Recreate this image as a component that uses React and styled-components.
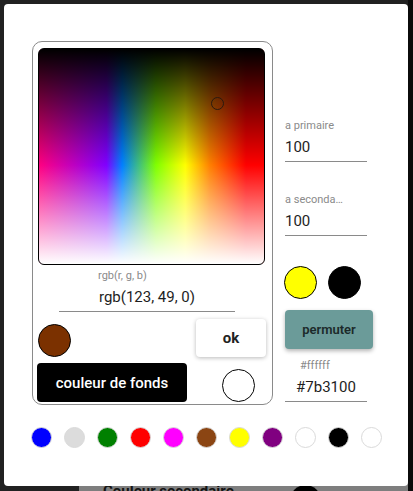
import React from 'react';
import styled, { createGlobalStyle } from 'styled-components';

const GlobalStyle = createGlobalStyle`
  html, body {
    margin: 0;
    padding: 0;
    background: #212121;
    font-family: Roboto, "Noto Sans", "Liberation Sans", sans-serif;
  }
  * { box-sizing: border-box; }
`;

const Screen = styled.div`
  position: relative;
  width: 413px;
  height: 491px;
  overflow: hidden;
  background: #212121;
  box-shadow: inset -5px 0 0 #0b0b0b;
`;

// page behind the modal (only a strip is visible at the bottom)
const Page = styled.div`
  padding-top: 479px;
`;

const PagePanel = styled.div`
  margin-left: 79px;
  width: 329px;
  height: 40px;
  background: #7e7e7e;
  display: flex;
  align-items: flex-start;
  padding: 3px 0 0 24px;
`;

const PageTitle = styled.div`
  font-size: 15px;
  font-weight: 700;
  color: #141414;
  white-space: nowrap;
  width: 187px;
`;

const PageDot = styled.div`
  width: 31px;
  height: 31px;
  border-radius: 50%;
  background: #000;
  margin-top: 3px;
`;

const Dialog = styled.div`
  position: absolute;
  top: 4px;
  left: 4px;
  width: 404px;
  height: 482px;
  background: #fff;
  border-radius: 4px;
  padding: 37px 0 0 28px;
`;

const Main = styled.div`
  display: flex;
  gap: 12px;
`;

const Card = styled.div`
  width: 241px;
  height: 364px;
  border: 1px solid #8a8a8a;
  border-radius: 10px;
  padding: 6px 0 0 5px;
  display: flex;
  flex-direction: column;
`;

const Saturation = styled.div`
  position: relative;
  width: 227px;
  height: 217px;
  border: 1px solid #000;
  border-radius: 6px;
  background:
    linear-gradient(to bottom, #000 0%, rgba(0,0,0,0) 54%, rgba(255,255,255,0) 54%, #fff 100%),
    linear-gradient(to right, #ff0080 0%, #8000ff 30%, #0080ff 37%, #80ff00 52%, #ffff00 65%, #ff8000 76%, #ff0000 92%, #ff0000 100%);
`;

const Cursor = styled.div`
  position: absolute;
  left: 172px;
  top: 48px;
  width: 13px;
  height: 13px;
  border-radius: 50%;
  border: 1.5px solid #2a1a10;
`;

const Field = styled.div`
  width: ${p => p.$width}px;
  margin-top: ${p => p.$top || 0}px;
  margin-left: ${p => p.$left || 0}px;
`;

const Label = styled.div`
  font-size: 11px;
  line-height: 14px;
  height: 14px;
  color: #8a8a8a;
  padding-left: ${p => p.$indent || 0}px;
  white-space: nowrap;
  overflow: hidden;
  text-overflow: ellipsis;
  max-width: ${p => p.$max ? `${p.$max}px` : 'none'};
`;

const Value = styled.div`
  margin-top: 3px;
  font-size: 15px;
  line-height: 22px;
  padding-bottom: 3px;
  color: #1e1e1e;
  text-align: ${p => p.$align || 'left'};
  border-bottom: 1px solid #8a8a8a;
`;

const Row = styled.div`
  display: flex;
  justify-content: space-between;
  align-items: flex-end;
  width: ${p => p.$width}px;
  margin-top: ${p => p.$top}px;
  margin-left: ${p => p.$left || 0}px;
`;

const Swatch = styled.div`
  width: ${p => p.$size || 33}px;
  height: ${p => p.$size || 33}px;
  border-radius: 50%;
  background: ${p => p.$color};
  border: 1px solid ${p => p.$border || '#000'};
  flex-shrink: 0;
`;

const OkButton = styled.button`
  width: 70px;
  height: 38px;
  border: none;
  border-radius: 4px;
  background: #fff;
  box-shadow: 0 1px 4px rgba(0,0,0,0.28);
  font-family: inherit;
  font-size: 15px;
  font-weight: 700;
  color: #222;
`;

const DarkButton = styled.button`
  width: 150px;
  height: 39px;
  border: none;
  border-radius: 4px;
  background: #000;
  color: #fff;
  font-family: inherit;
  font-size: 15px;
  font-weight: 500;
`;

const Side = styled.div`
  width: 90px;
  padding-top: 78px;
  display: flex;
  flex-direction: column;
`;

const SwatchPair = styled.div`
  display: flex;
  gap: 11px;
  margin-top: 30px;
  margin-left: -1px;
`;

const SwapButton = styled.button`
  margin-top: 11px;
  width: 88px;
  height: 39px;
  border: none;
  border-radius: 4px;
  background: #6b9b99;
  box-shadow: 0 2px 4px rgba(0,0,0,0.3);
  font-family: inherit;
  font-size: 13px;
  font-weight: 600;
  color: #1c2a2a;
`;

const Palette = styled.div`
  display: flex;
  gap: 12px;
  margin-top: 22px;
  margin-left: -1px;
`;

const palette = ['#0000ff', '#dcdcdc', '#008000', '#ff0000', '#ff00ff', '#8b4513', '#ffff00', '#800080', '#ffffff', '#000000', '#ffffff'];

export default function App() {
  return (
    <>
      <GlobalStyle />
      <Screen>
        <Page>
          <PagePanel>
            <PageTitle>Couleur secondaire</PageTitle>
            <PageDot />
          </PagePanel>
        </Page>
        <Dialog>
          <Main>
            <Card>
              <Saturation>
                <Cursor />
              </Saturation>
              <Field $width={176} $top={4} $left={21}>
                <Label $indent={39}>rgb(r, g, b)</Label>
                <Value $align="center">rgb(123, 49, 0)</Value>
              </Field>
              <Row $width={228} $top={7}>
                <Swatch $color="#7b3100" />
                <OkButton>ok</OkButton>
              </Row>
              <Row $width={218} $top={6} $left={-1}>
                <DarkButton>couleur de fonds</DarkButton>
                <Swatch $color="#fff" />
              </Row>
            </Card>
            <Side>
              <Field $width={82}>
                <Label>a primaire</Label>
                <Value>100</Value>
              </Field>
              <Field $width={82} $top={31}>
                <Label $max={59}>a secondaire</Label>
                <Value>100</Value>
              </Field>
              <SwatchPair>
                <Swatch $color="#ffff00" />
                <Swatch $color="#000" />
              </SwatchPair>
              <SwapButton>permuter</SwapButton>
              <Field $width={82} $top={10}>
                <Label $indent={15}>#ffffff</Label>
                <Value $align="center">#7b3100</Value>
              </Field>
            </Side>
          </Main>
          <Palette>
            {palette.map((c, i) => (
              <Swatch key={i} $size={21} $color={c} $border="#dadada" />
            ))}
          </Palette>
        </Dialog>
      </Screen>
    </>
  );
}
